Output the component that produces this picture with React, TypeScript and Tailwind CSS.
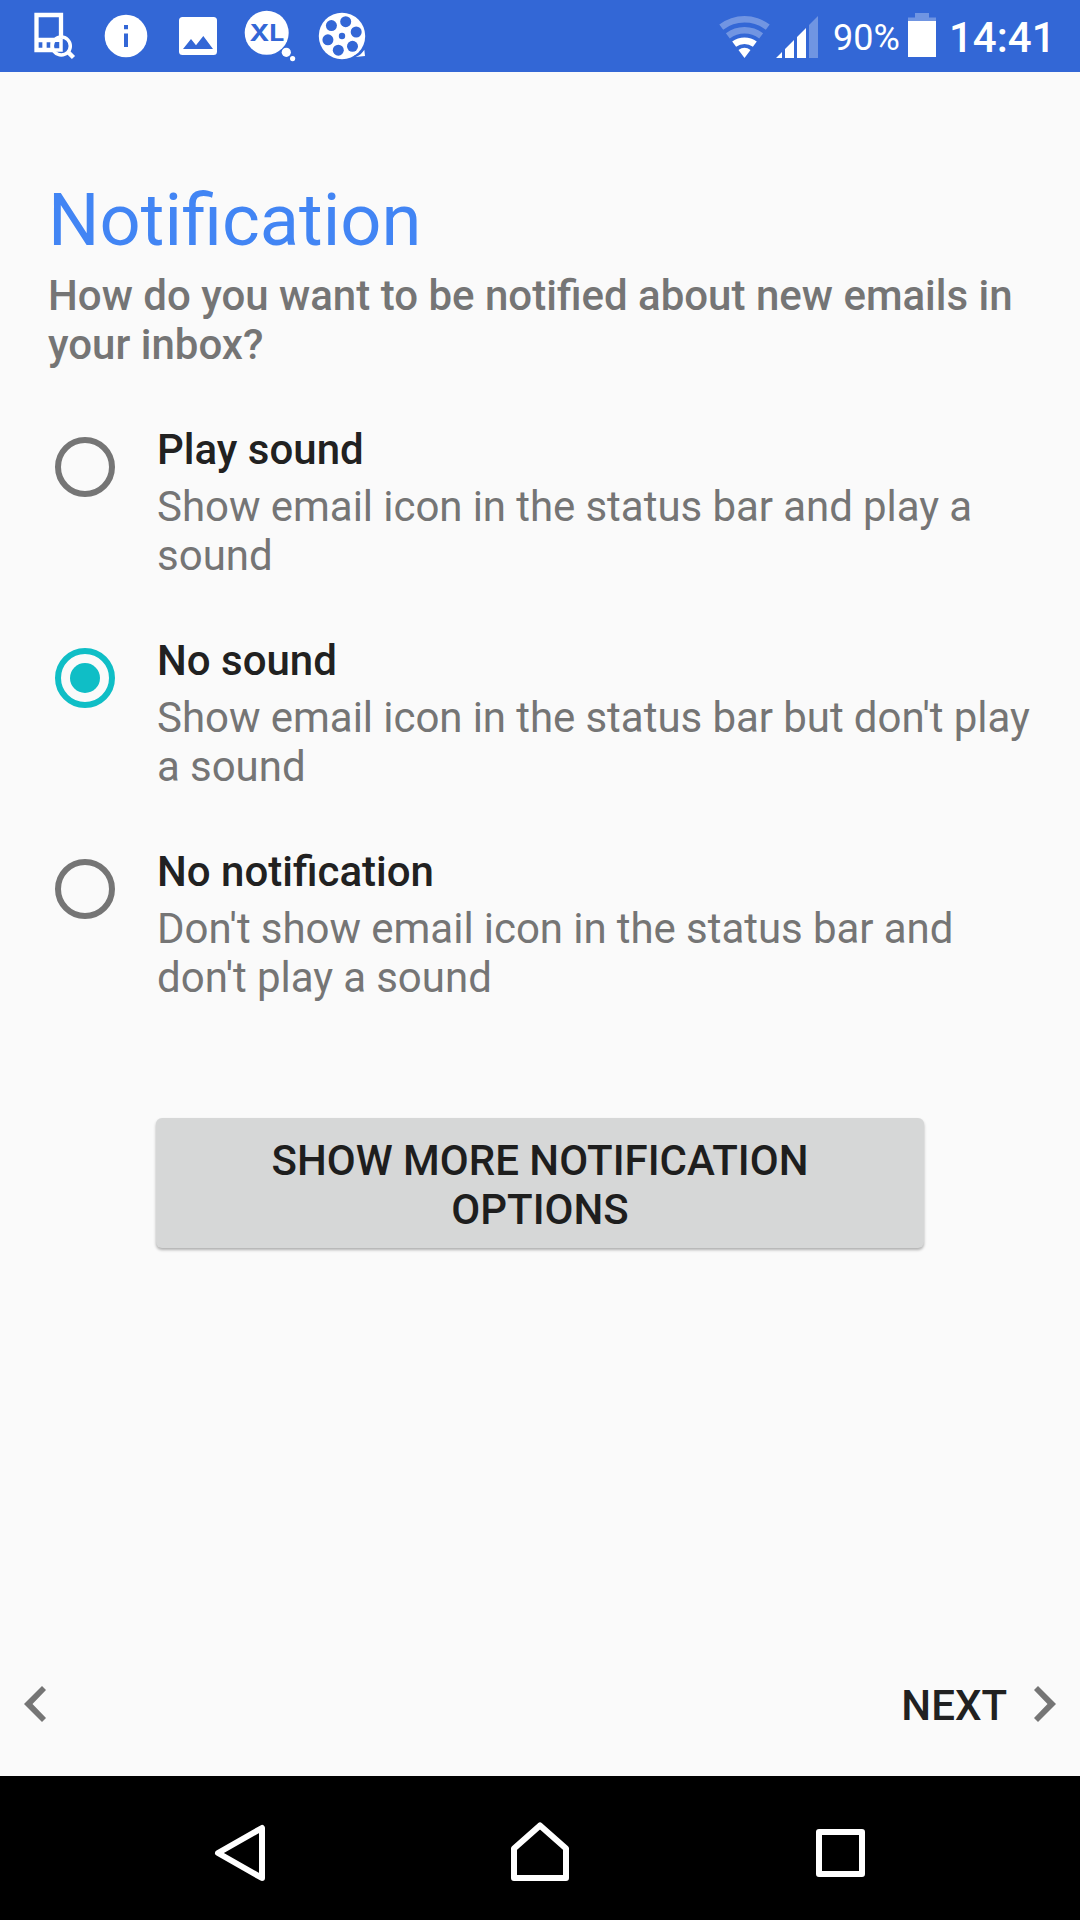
import { useState } from 'react';

const OPTIONS = [
  {
    id: 'sound',
    title: 'Play sound',
    summary: 'Show email icon in the status bar and play a sound',
  },
  {
    id: 'silent',
    title: 'No sound',
    summary: "Show email icon in the status bar but don't play a sound",
  },
  {
    id: 'none',
    title: 'No notification',
    summary: "Don't show email icon in the status bar and don't play a sound",
  },
];

function StatusBar() {
  return (
    <header className="flex h-[72px] shrink-0 items-center justify-between bg-[#3367d6] pl-[18px] text-white">
      <div className="flex">
        {/* device search */}
        <svg className="size-[72px]" viewBox="0 0 72 72" fill="none" stroke="currentColor">
          <path d="M18.500 15h24.500v35H18.500zM18.500 40h24.500M26.500 40v11M34.500 40v11" strokeWidth="4.300" />
          <circle cx="43.300" cy="46" r="9" fill="#3367d6" stroke="none" />
          <path d="M35 40.200h8v9.800h-8" strokeWidth="3.500" />
          <circle cx="43.300" cy="46" r="9" strokeWidth="3.500" />
          <path d="M49.500 51.500l6 6" strokeWidth="4.500" />
        </svg>
        {/* info */}
        <svg className="size-[72px]" viewBox="0 0 72 72" fill="currentColor">
          <circle cx="36" cy="36" r="21.3" />
          <path d="M34 25h4v4.2h-4zM34 33.5h4V47h-4z" fill="#3367d6" />
        </svg>
        {/* picture */}
        <svg className="size-[72px]" viewBox="0 0 72 72" fill="currentColor">
          <rect x="17" y="17" width="38" height="38" rx="3.5" />
          <path d="M21 49l8-10 5 6.3L41.3 36 51 49z" fill="#3367d6" />
        </svg>
        {/* XL bubble */}
        <svg className="size-[72px]" viewBox="0 0 72 72" fill="currentColor">
          <circle cx="32.7" cy="32.8" r="22" />
          <circle cx="52.3" cy="52.3" r="4.6" />
          <circle cx="58.6" cy="58.6" r="2.6" />
          <text
            x="15.5"
            y="40.8"
            textLength="35"
            lengthAdjust="spacingAndGlyphs"
            fill="#3367d6"
            className="font-['Inter',sans-serif] text-[22.5px] font-bold"
          >
            XL
          </text>
        </svg>
        {/* film reel */}
        <svg className="size-[72px]" viewBox="0 0 72 72" fill="currentColor">
          <circle cx="36" cy="36" r="23.2" />
          <path d="M49.5 57c4-1.2 6.8-4 8.800-7.3L59 56z" />
          <g fill="#3367d6">
            <circle cx="25.4" cy="25.6" r="5.5" />
            <circle cx="39.7" cy="21.7" r="5.5" />
            <circle cx="50.2" cy="32" r="5.5" />
            <circle cx="46.5" cy="46.3" r="5.5" />
            <circle cx="32.3" cy="50.2" r="5.5" />
            <circle cx="21.9" cy="39.8" r="5.5" />
            <circle cx="36" cy="36" r="3.2" />
          </g>
          <path d="M48.5 56.300c4.500-1.800 7.500-4.800 9.500-8.300" fill="none" stroke="#3367d6" strokeWidth="1.500" />
        </svg>
      </div>

      <div className="flex h-full items-center">
        {/* wifi */}
        <svg className="h-[72px] w-[52px]" viewBox="-0.5 0 52 72" fill="currentColor">
          <g opacity="0.3">
            <path d="M.8 24.5A42 42 0 0 1 51.2 24.5L47.3 29.7A35.5 35.5 0 0 0 4.7 29.7z" />
            <path d="M7.4 33.2A31 31 0 0 1 44.6 33.2L40.7 38.4A24.5 24.5 0 0 0 11.3 38.4z" />
          </g>
          <path d="M13.7 41.6A20.5 20.5 0 0 1 38.3 41.6L34.4 46.800A14 14 0 0 0 17.6 46.8z" />
          <path d="M20 50A10 10 0 0 1 32 50L26 58z" />
        </svg>
        {/* cell signal */}
        <svg className="ml-1.5 h-[72px] w-[42px]" viewBox="0 0 42 72" fill="currentColor">
          <path d="M0 58l6-6v6zM9 58V49l9-9v18zM21 58V37l9-9v30z" />
          <path d="M33 58V25l9-9v42z" opacity="0.3" />
        </svg>
        <span className="ml-[15px] w-[68px] pt-[4px] text-[36px] leading-[42px]">90%</span>
        <svg className="ml-[7px] h-[72px] w-[28px]" viewBox="0 0 28 72" fill="currentColor">
          <path d="M0 21v-3.5h7V13h14v4.5h7V21z" opacity="0.3" />
          <path d="M0 21h28v36H0z" />
        </svg>
        <span className="ml-[13px] w-[131px] pt-[3px] text-[42px] leading-[49px] font-medium">14:41</span>
      </div>
    </header>
  );
}

function Radio({ checked }: { checked: boolean }) {
  return (
    <span
      className={
        checked
          ? 'mt-[12px] flex size-[60px] shrink-0 items-center justify-center rounded-full border-[6px] border-[#0fbec6]'
          : 'mt-[12px] flex size-[60px] shrink-0 items-center justify-center rounded-full border-[6px] border-[#757575]'
      }
    >
      {checked && <span className="size-[30px] rounded-full bg-[#0fbec6]" />}
    </span>
  );
}

function NavBar() {
  return (
    <nav className="flex h-[144px] shrink-0 items-center justify-between bg-black px-[204px] text-white">
      <button aria-label="Back">
        <svg className="size-[72px]" viewBox="0 0 72 72" fill="none" stroke="currentColor" strokeWidth="6" strokeLinejoin="round">
          <path d="M14 41l44-25v50z" />
        </svg>
      </button>
      <button aria-label="Home">
        <svg className="size-[72px]" viewBox="0 0 72 72" fill="none" stroke="currentColor" strokeWidth="6" strokeLinejoin="round">
          <path d="M36 13.5L62 36.5V66H10V36.5z" />
        </svg>
      </button>
      <button aria-label="Recent apps">
        <svg className="size-[72px]" viewBox="0 0 72 72" fill="none" stroke="currentColor" strokeWidth="6" strokeLinejoin="round">
          <path d="M15 20h43v42H15z" />
        </svg>
      </button>
    </nav>
  );
}

export default function App() {
  const [selected, setSelected] = useState('silent');

  return (
    <div className="flex h-[1920px] w-[1080px] flex-col bg-[#fafafa] font-['Roboto',sans-serif]">
      <StatusBar />

      <main className="flex flex-1 flex-col pt-[107px]">
        <div className="px-12">
          <h1 className="text-[72.25px] leading-[84px] text-[#4285f4]">Notification</h1>
          <p className="mt-2 text-[42px] leading-[49px] font-medium text-[#757575]">
            How do you want to be notified about new emails in your inbox?
          </p>
        </div>

        <div role="radiogroup" className="mt-14 flex flex-col gap-14 pr-[30px] pl-[55px]">
          {OPTIONS.map((option) => (
            <button
              key={option.id}
              role="radio"
              aria-checked={selected === option.id}
              onClick={() => setSelected(option.id)}
              className="flex items-start gap-[42px] text-left"
            >
              <Radio checked={selected === option.id} />
              <span className="flex flex-col gap-2 text-[42px] leading-[49px]">
                <span className="font-medium text-[#212121]">{option.title}</span>
                <span className="text-[#757575] [word-spacing:-0.3px]">{option.summary}</span>
              </span>
            </button>
          ))}
        </div>

        <button className="mx-[156px] mt-[116px] h-[130px] rounded-[6px] bg-[#d6d7d7] px-24 pt-[3px] text-[42px] leading-[49px] font-medium text-[#1e1e1e] shadow-[0_2px_3px_rgba(0,0,0,0.3)]">
          SHOW MORE NOTIFICATION OPTIONS
        </button>

        <div className="mt-auto flex h-[144px] items-center justify-between px-6">
          <button aria-label="Previous">
            <svg className="h-[36px] w-[22px]" viewBox="0 0 22 36" fill="#757575">
              <path d="M18 0l4 4L8.5 18 22 32l-4 4L0 18z" />
            </svg>
          </button>
          <button className="flex items-center gap-[27px]">
            <span className="pt-[2px] text-[42px] leading-[49px] font-medium text-[#212121]">NEXT</span>
            <svg className="h-[36px] w-[22px]" viewBox="0 0 22 36" fill="#757575">
              <path d="M4 0L0 4l13.5 14L0 32l4 4 18-18z" />
            </svg>
          </button>
        </div>
      </main>

      <NavBar />
    </div>
  );
}
